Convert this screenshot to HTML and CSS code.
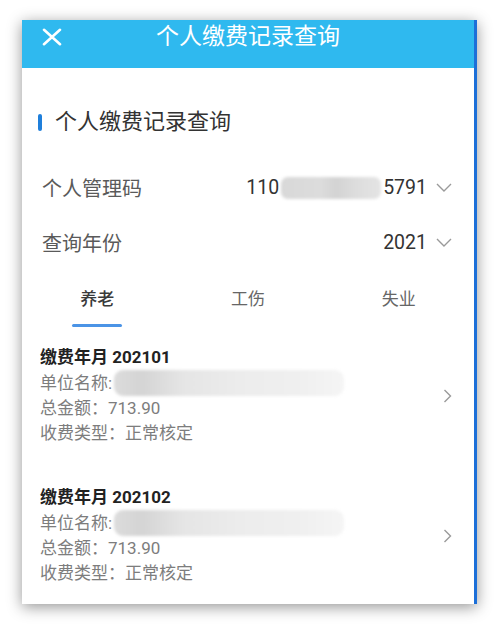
FILE: index.html
```html
<!DOCTYPE html>
<html lang="zh-CN">
<head>
<meta charset="utf-8">
<title>个人缴费记录查询</title>
<link rel="stylesheet" href="styles.css">
</head>
<body>
<div class="phone">
  <header class="topbar">
    <div class="topbar-left">
      <svg class="close-icon" width="20" height="18" viewBox="0 0 20 18" aria-hidden="true">
        <path d="M2 1.8 L18 16.2 M18 1.8 L2 16.2" stroke="#fff" stroke-width="2.6" stroke-linecap="round" fill="none"/>
      </svg>
    </div>
    <h1 class="topbar-title">个人缴费记录查询</h1>
    <div class="topbar-right"></div>
  </header>

  <main class="content">
    <h2 class="section-title"><span class="section-bar"></span>个人缴费记录查询</h2>

    <div class="field-row">
      <span class="field-label">个人管理码</span>
      <span class="field-value">110<span class="mask mask-code"></span>5791<svg class="chev-down" width="16" height="9" viewBox="0 0 16 9" aria-hidden="true"><path d="M1 1 L8 8 L15 1" stroke="#9a9a9a" stroke-width="1.4" fill="none"/></svg></span>
    </div>
    <div class="field-row">
      <span class="field-label">查询年份</span>
      <span class="field-value">2021<svg class="chev-down" width="16" height="9" viewBox="0 0 16 9" aria-hidden="true"><path d="M1 1 L8 8 L15 1" stroke="#9a9a9a" stroke-width="1.4" fill="none"/></svg></span>
    </div>

    <nav class="tabs">
      <div class="tab tab-active"><span class="tab-text">养老</span><span class="tab-ink"></span></div>
      <div class="tab"><span class="tab-text">工伤</span><span class="tab-ink"></span></div>
      <div class="tab"><span class="tab-text">失业</span><span class="tab-ink"></span></div>
    </nav>

    <section class="record">
      <div class="record-body">
        <div class="record-title">缴费年月 202101</div>
        <div class="record-line">单位名称:<span class="mask mask-name"></span></div>
        <div class="record-line">总金额：713.90</div>
        <div class="record-line">收费类型：正常核定</div>
      </div>
      <svg class="chev-right" width="9" height="14" viewBox="0 0 9 14" aria-hidden="true"><path d="M1.5 1 L7.5 7 L1.5 13" stroke="#9a9a9a" stroke-width="1.4" fill="none"/></svg>
    </section>

    <section class="record">
      <div class="record-body">
        <div class="record-title">缴费年月 202102</div>
        <div class="record-line">单位名称:<span class="mask mask-name"></span></div>
        <div class="record-line">总金额：713.90</div>
        <div class="record-line">收费类型：正常核定</div>
      </div>
      <svg class="chev-right" width="9" height="14" viewBox="0 0 9 14" aria-hidden="true"><path d="M1.5 1 L7.5 7 L1.5 13" stroke="#9a9a9a" stroke-width="1.4" fill="none"/></svg>
    </section>
  </main>
</div>
</body>
</html>
```

FILE: styles.css
```css
html, body {
  margin: 0;
  padding: 0;
  background: #ffffff;
}

body {
  font-family: Roboto, "Noto Sans CJK SC", "Noto Sans", sans-serif;
  width: 500px;
  height: 625px;
  overflow: hidden;
}

.phone {
  margin: 20px 0 0 22px;
  width: 452px;
  height: 584px;
  border-right: 3px solid #1c6fd8;
  background: #ffffff;
  box-shadow: 0 3px 14px rgba(0, 0, 0, 0.42);
  overflow: hidden;
}

/* top bar */
.topbar {
  height: 48px;
  background: #2fb9ef;
  display: grid;
  grid-template-columns: 1fr auto 1fr;
  align-items: start;
}

.topbar-left {
  padding: 8px 0 0 20px;
}

.close-icon {
  display: block;
}

.topbar-title {
  margin: 0;
  font-size: 23px;
  font-weight: 400;
  line-height: 34px;
  color: #ffffff;
  letter-spacing: 0;
}

/* content */
.section-title {
  margin: 39px 0 0 0;
  padding-left: 16px;
  display: flex;
  align-items: center;
  font-size: 22px;
  font-weight: 400;
  line-height: 30px;
  color: #333333;
}

.section-bar {
  width: 4px;
  height: 17px;
  border-radius: 2px;
  background: #1f7fdb;
  margin-right: 13px;
}

.field-row {
  height: 55px;
  padding: 0 22px 0 20px;
  display: flex;
  align-items: center;
  justify-content: space-between;
}

.field-row:first-of-type {
  margin-top: 23px;
}

.field-label {
  font-size: 20px;
  color: #5a5a5a;
}

.field-value {
  display: flex;
  align-items: center;
  font-size: 19.5px;
  color: #333333;
}

.chev-down {
  margin-left: 9px;
  display: block;
}

.mask {
  display: inline-block;
  filter: blur(1.5px);
}

.mask-code {
  width: 100px;
  height: 22px;
  margin: 0 2px;
  border-radius: 7px;
  background: linear-gradient(90deg, #d8d8d8 0%, #dcdcdc 40%, #d3d3d3 55%, #dddddd 75%, #e4e4e4 100%);
}

/* tabs */
.tabs {
  margin-top: 17px;
  display: grid;
  grid-template-columns: 1fr 1fr 1fr;
}

.tab {
  display: flex;
  flex-direction: column;
  align-items: center;
}

.tab-text {
  font-size: 17px;
  line-height: 24px;
  color: #666666;
}

.tab-ink {
  margin-top: 12.5px;
  width: 50px;
  height: 3.5px;
  border-radius: 2px;
  background: transparent;
}

.tab-active .tab-text {
  color: #3a3a3a;
  font-weight: 500;
}

.tab-active .tab-ink {
  background: #4b94e6;
}

/* records */
.record {
  margin-top: 39px;
  padding: 0 22px 0 18px;
  display: flex;
  align-items: center;
  justify-content: space-between;
}

.tabs + .record {
  margin-top: 18px;
}

.record-title {
  font-size: 17px;
  font-weight: 700;
  line-height: 25px;
  color: #222222;
}

.record-line {
  font-size: 17px;
  line-height: 25px;
  color: #7d7d7d;
}

.mask-name {
  width: 230px;
  height: 26px;
  margin-left: 2px;
  vertical-align: -7px;
  border-radius: 9px;
  background: linear-gradient(90deg, #dcdcdc 0%, #d4d4d4 12%, #e5e5e5 30%, #ececec 55%, #efefef 80%, #f5f5f5 100%);
}

.chev-right {
  display: block;
}
```
